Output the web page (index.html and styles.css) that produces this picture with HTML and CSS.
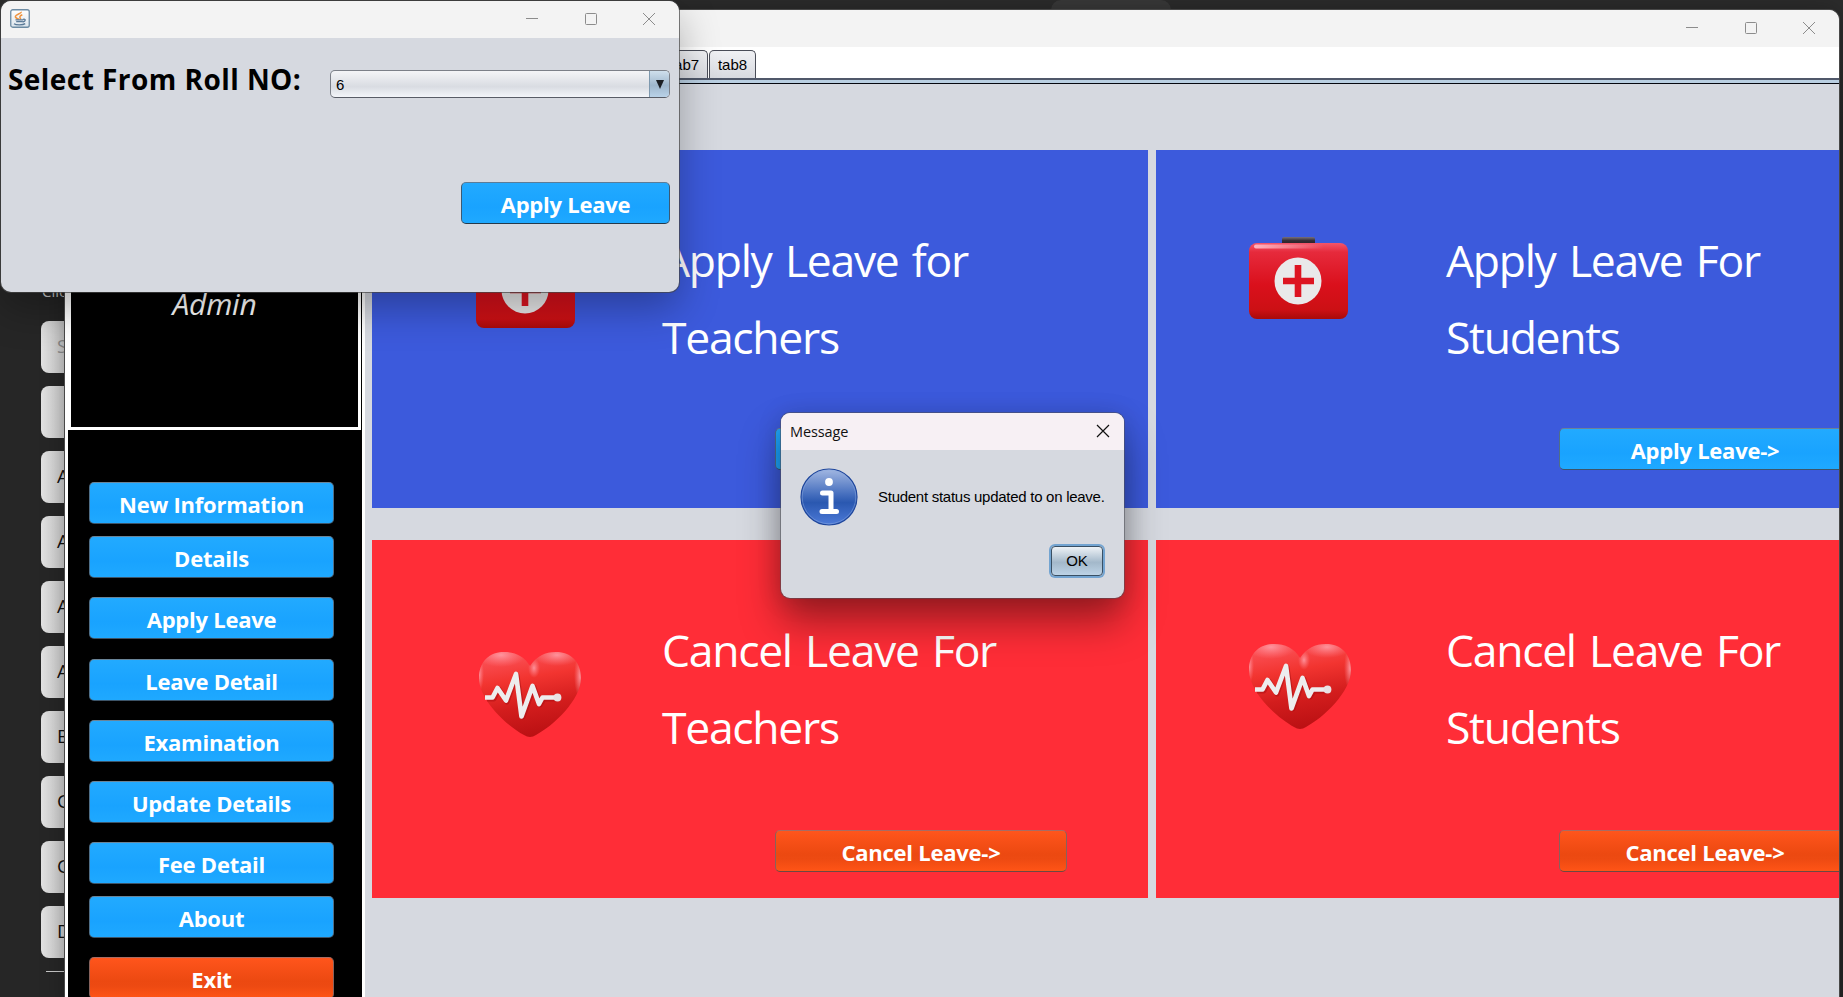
FILE: index.html
```html
<!DOCTYPE html>
<html lang="en">
<head>
<meta charset="utf-8">
<title>Leave Management</title>
<link rel="stylesheet" href="styles.css">
</head>
<body>
<svg class="defs" width="0" height="0" aria-hidden="true">
  <defs>
    <linearGradient id="kitBody" x1="0" y1="0" x2="0" y2="1">
      <stop offset="0" stop-color="#f4566a"/><stop offset=".12" stop-color="#e62a3c"/>
      <stop offset=".55" stop-color="#da101c"/><stop offset=".88" stop-color="#cc1014"/><stop offset="1" stop-color="#a80a0a"/>
    </linearGradient>
    <linearGradient id="kitShine" x1="0" y1="0" x2="1" y2="0">
      <stop offset="0" stop-color="#ffb4c0"/><stop offset="1" stop-color="#ffb4c0" stop-opacity="0"/>
    </linearGradient>
    <linearGradient id="handle" x1="0" y1="0" x2="0" y2="1">
      <stop offset="0" stop-color="#77707c"/><stop offset=".4" stop-color="#352d35"/><stop offset="1" stop-color="#2a1a1f"/>
    </linearGradient>
    <linearGradient id="heartBody" x1=".4" y1="0" x2=".6" y2="1">
      <stop offset="0" stop-color="#fb5258"/><stop offset=".3" stop-color="#f23430"/>
      <stop offset=".62" stop-color="#d31d1d"/><stop offset="1" stop-color="#b80f12"/>
    </linearGradient>
    <radialGradient id="glow">
      <stop offset="0" stop-color="#ffa0aa" stop-opacity=".85"/><stop offset="1" stop-color="#ff8088" stop-opacity="0"/>
    </radialGradient>
    <linearGradient id="info" x1="0" y1="0" x2="0" y2="1">
      <stop offset="0" stop-color="#a3b8e2"/><stop offset=".45" stop-color="#466fbe"/>
      <stop offset=".6" stop-color="#2a58b0"/><stop offset="1" stop-color="#4d7ad8"/>
    </linearGradient>
    <linearGradient id="javaBg" x1="0" y1="0" x2="0" y2="1">
      <stop offset="0" stop-color="#fff"/><stop offset="1" stop-color="#dce5ec"/>
    </linearGradient>
    <clipPath id="heartClip"><path d="M51 14C58 4 66 0 77 0C92 0 102 10 102 26C102 48 74 74 57 83Q51 87 45 83C28 74 0 48 0 26C0 10 10 0 25 0C36 0 45 4 51 14Z"/></clipPath>
    <symbol id="kit" viewBox="0 0 99 82">
      <rect x="33" y="0" width="33" height="9" rx="2" fill="url(#handle)"/>
      <rect x="0" y="6" width="99" height="76" rx="8" fill="url(#kitBody)"/>
      <rect x="5" y="7.5" width="70" height="4" rx="2" fill="url(#kitShine)"/>
      <circle cx="49" cy="44" r="23.5" fill="#e9e9ea"/>
      <path d="M34 44h31M49 28v32" stroke="#dd1421" stroke-width="6.6"/>
    </symbol>
    <symbol id="heart" viewBox="0 0 102 86">
      <g clip-path="url(#heartClip)">
        <rect width="102" height="86" fill="url(#heartBody)"/>
        <ellipse cx="22" cy="3" rx="25" ry="12" fill="url(#glow)"/>
        <ellipse cx="78" cy="3" rx="24" ry="11" fill="url(#glow)"/>
        <ellipse cx="101" cy="24" rx="6" ry="22" fill="url(#glow)"/>
        <ellipse cx="0" cy="22" rx="5" ry="18" fill="url(#glow)"/>
        <ellipse cx="55" cy="16" rx="6" ry="10" fill="url(#glow)"/>
      </g>
      <path d="M8 47H15L20 37L28 50L38 23L44 65L55 35L61 53L65 47H79" fill="none" stroke="#a80d12" stroke-width="5" stroke-linejoin="round" opacity=".5"/>
      <path d="M6 45.5H13.5L18.5 36L27 48.500L37 22L42.500 64.500L53.500 34L60 52L63.500 45.500H78" fill="none" stroke="#ededee" stroke-width="4.700" stroke-linejoin="round"/>
      <circle cx="78.500" cy="45.500" r="3.900" fill="#e9e2e4"/>
    </symbol>
  </defs>
</svg>

<main class="desktop">
  <div class="back-tab"></div>

  <aside class="back-list">
    <p class="back-hint">Click</p>
    <div class="back-item muted">S</div>
    <div class="back-item"></div>
    <div class="back-item">A</div>
    <div class="back-item">A</div>
    <div class="back-item">A</div>
    <div class="back-item">A</div>
    <div class="back-item">B</div>
    <div class="back-item">C</div>
    <div class="back-item">C</div>
    <div class="back-item">D</div>
    <div class="back-edge"></div>
  </aside>

  <section class="window main-window">
    <header class="titlebar main-title">
      <svg class="ctl" viewBox="0 0 12 12"><path d="M0 5.500H12"/></svg>
      <svg class="ctl" viewBox="0 0 12 12"><rect x=".5" y=".5" width="11" height="11" rx="1"/></svg>
      <svg class="ctl" viewBox="0 0 12 12"><path d="M0 0L12 12M12 0L0 12"/></svg>
    </header>
    <div class="main-body">
      <nav class="sidebar">
        <div class="profile"><span class="role">Admin</span></div>
        <div class="menu">
          <button class="btn">New Information</button>
          <button class="btn near">Details</button>
          <button class="btn">Apply Leave</button>
          <button class="btn far">Leave Detail</button>
          <button class="btn">Examination</button>
          <button class="btn">Update Details</button>
          <button class="btn">Fee Detail</button>
          <button class="btn near">About</button>
          <button class="btn danger">Exit</button>
        </div>
      </nav>
      <div class="content">
        <div class="tabs"><span class="tab">tab7</span><span class="tab">tab8</span></div>
        <div class="tab-rule"></div>
        <div class="cards">
          <article class="card apply">
            <svg class="kit low" viewBox="0 0 99 82"><use href="#kit"/></svg>
            <div class="card-body"><h2>Apply Leave for<br>Teachers</h2><button class="btn wide">Apply Leave-&gt;</button></div>
          </article>
          <article class="card apply">
            <svg class="kit" viewBox="0 0 99 82"><use href="#kit"/></svg>
            <div class="card-body"><h2>Apply Leave For<br>Students</h2><button class="btn wide">Apply Leave-&gt;</button></div>
          </article>
          <article class="card cancel">
            <svg class="heart low" viewBox="0 0 102 86"><use href="#heart"/></svg>
            <div class="card-body"><h2>Cancel Leave For<br>Teachers</h2><button class="btn wide danger">Cancel Leave-&gt;</button></div>
          </article>
          <article class="card cancel">
            <svg class="heart" viewBox="0 0 102 86"><use href="#heart"/></svg>
            <div class="card-body"><h2>Cancel Leave For<br>Students</h2><button class="btn wide danger">Cancel Leave-&gt;</button></div>
          </article>
        </div>
      </div>
    </div>
  </section>

  <section class="window roll-window">
    <header class="titlebar roll-title">
      <svg class="java" viewBox="0 0 20 20">
        <rect x=".75" y=".75" width="18.500" height="17.500" rx="2" fill="url(#javaBg)" stroke="#6d8ba3" stroke-width="1.300"/>
        <path d="M11.200 2.800C12 5-.5 6.500 8.800 10.300M12.300 5.800C9.500 7 9.200 8 10.800 10.300" fill="none" stroke="#ef9440" stroke-width="1.500"/>
        <path d="M5.500 10.800H13.200M6.200 12.700H12.600M13 10.400C16 9.500 16 12.400 12.700 13" fill="none" stroke="#5b7a97" stroke-width="1.300"/>
        <path d="M4 14.700C6 16.200 13 16.200 15.200 14.600" fill="none" stroke="#5b7a97" stroke-width="1.300"/>
      </svg>
      <svg class="ctl" viewBox="0 0 12 12"><path d="M0 5.500H12"/></svg>
      <svg class="ctl" viewBox="0 0 12 12"><rect x=".5" y=".5" width="11" height="11" rx="1"/></svg>
      <svg class="ctl" viewBox="0 0 12 12"><path d="M0 0L12 12M12 0L0 12"/></svg>
    </header>
    <div class="roll-row">
      <label class="roll-label">Select From Roll NO:</label>
      <div class="combo"><span class="combo-value">6</span><span class="combo-arrow"><svg viewBox="0 0 8 9" width="8" height="9"><path d="M0 0H8L4 9Z" fill="#1c1f24"/></svg></span></div>
    </div>
    <div class="roll-actions"><button class="btn">Apply Leave</button></div>
  </section>

  <section class="window dialog">
    <header class="dialog-title"><span>Message</span>
      <svg class="ctl dark" viewBox="0 0 12 12"><path d="M0 0L12 12M12 0L0 12"/></svg>
    </header>
    <div class="dialog-row">
      <svg class="info" viewBox="0 0 58 58">
        <circle cx="29" cy="29" r="28" fill="url(#info)" stroke="#1e469c" stroke-width="1.200"/>
        <circle cx="29" cy="29" r="26.800" fill="none" stroke="#8eaae0" stroke-width=".8" opacity=".6"/>
        <circle cx="29" cy="14" r="3.900" fill="#fff"/>
        <path d="M22.500 25H31V43.500M22 43.500H36.500" fill="none" stroke="#fff" stroke-width="5" stroke-linecap="round" stroke-linejoin="round"/>
      </svg>
      <p class="dialog-text">Student status updated to on leave.</p>
    </div>
    <div class="dialog-actions"><button class="ok">OK</button></div>
  </section>
</main>
</body>
</html>
```
FILE: styles.css
```css
* { box-sizing: border-box; }
body { margin: 0; background: #262626; font-family: "Open Sans", "Noto Sans", sans-serif; overflow: hidden; }
button { font: inherit; margin: 0; }
h2, p { margin: 0; }
.defs { position: absolute; }

.desktop {
  position: relative;
  width: 1843px;
  height: 997px;
  overflow: hidden;
  background: linear-gradient(#2c2c2c 0 60px, #262626 120px);
}
.back-tab {
  position: absolute;
  left: 1051px; top: 0;
  width: 120px; height: 10px;
  background: #393939;
  border-radius: 10px 10px 0 0;
}

/* form behind the main window */
.back-list {
  position: absolute;
  left: 41px; top: 278px;
  width: 60px;
  display: flex;
  flex-direction: column;
  gap: 13px;
}
.back-hint { height: 30px; font-size: 15px; line-height: 26px; color: #cfcfcf; padding-left: 1px; }
.back-item {
  height: 52px;
  border-radius: 8px;
  background: linear-gradient(90deg, #e2e2e2, #c8c8c8 24px);
  padding-left: 16px;
  font-size: 19px;
  line-height: 51px;
  color: #111;
  flex: none;
}
.muted { color: #8d8d8d; }
.back-edge { height: 1px; margin-left: 5px; background: #c8c8c8; }

.window { position: absolute; overflow: hidden; background: #d6d9e0; }
.titlebar { display: flex; align-items: center; background: #f3f3f3; }
.ctl { width: 12px; height: 12px; flex: none; fill: none; stroke: #8c8c8c; stroke-width: 1; overflow: visible; }
.ctl.dark { stroke: #111; stroke-width: 1.2; }

/* main window */
.main-window {
  left: 65px; top: 10px;
  width: 1774px; height: 1000px;
  border-radius: 10px 10px 0 0;
  background: #fff;
  box-shadow: 0 0 0 1px #484848, 0 0 24px rgba(0, 0, 0, .3);
}
.main-title { height: 37px; justify-content: flex-end; gap: 46.5px; padding: 0 24px 2px 0; }
.main-body { display: flex; height: 963px; }
.sidebar { width: 300px; flex: none; background: #000; border: 3px solid #fff; border-top: 0; }
.profile {
  width: 293px; height: 383px;
  border: 3px solid #fff;
  display: flex;
  justify-content: center;
  align-items: flex-end;
  padding-bottom: 98px;
}
.role { color: #fff; font-size: 30px; line-height: 50px; font-style: italic; font-weight: 400; letter-spacing: -.2px; }
.menu { display: flex; flex-direction: column; padding: 52px 28px 0 21px; gap: 19px; }
.menu .near { margin-top: -7px; }
.menu .far { margin-top: 1px; }

.btn {
  height: 42px;
  flex: none;
  border: 1px solid;
  border-color: #6a8498 #4f6f88 #3d5468;
  border-radius: 5px;
  background: linear-gradient(#22aaff, #19a3ff 60%, #1fa9ff);
  color: #fff;
  font-size: 22px;
  font-weight: 700;
  line-height: 36px;
  padding: 1px 0 0;
  letter-spacing: -.24px;
  white-space: nowrap;
}
.danger {
  border-color: #a86c64 #87625c #6d4842;
  background: linear-gradient(#ff551c, #ec4911 58%, #ed4a12 70%, #ff5416);
}

.content { flex: 1; min-width: 0; background: #d6d9e0; display: flex; flex-direction: column; }
.tabs {
  height: 31px;
  flex: none;
  background: #fff;
  display: flex;
  align-items: flex-end;
  gap: 1px;
  padding-left: 296px;
}
.tab {
  width: 47px; height: 28px;
  border: 1px solid #4a4d58;
  border-bottom: 0;
  border-radius: 5px 5px 0 0;
  background: linear-gradient(#f0f1f4, #d8dae0);
  text-align: center;
  font: 15px/27px "Liberation Sans", Arial, sans-serif;
}
.tab-rule { height: 6px; flex: none; background: #b9cfe2; border-top: 2px solid #50586a; border-bottom: 1px solid #05070f; }
.cards {
  display: grid;
  grid-template-columns: 776px 776px;
  grid-template-rows: 358px 358px;
  gap: 32px 8px;
  padding: 66px 0 0 7px;
}
.card { display: flex; }
.apply { background: #3c5adc; }
.cancel { background: #ff2d37; }
.card-body { padding: 71px 0 0; display: flex; flex-direction: column; align-items: flex-start; }
.card h2 {
  color: #fff;
  font-size: 44.5px;
  line-height: 77px;
  font-weight: 400;
  letter-spacing: -1.3px;
  word-spacing: 3px;
  white-space: nowrap;
}
.card .wide { width: 292px; margin-left: 113px; }
.apply .wide { margin-top: 53px; }
.cancel .wide { margin-top: 65px; }
.kit { width: 99px; height: 82px; margin: 87px 98px 0 93px; flex: none; }
.kit.low { margin: 96px 87px 0 104px; }
.heart { width: 102px; height: 86px; margin: 104px 95px 0 93px; flex: none; }
.heart.low { margin: 112px 81px 0 107px; }

/* roll number window */
.roll-window {
  left: 1px; top: 1px;
  width: 678px; height: 291px;
  border-radius: 10px;
  box-shadow: 0 0 0 1px rgba(70, 70, 70, .7), 0 16px 40px rgba(0, 0, 0, .3);
}
.roll-title { height: 37px; gap: 46.5px; padding: 0 24px 1px 9px; }
.java { width: 20px; height: 20px; margin-right: auto; }
.roll-row { display: flex; align-items: flex-start; justify-content: space-between; padding: 22px 9px 0 7px; height: 145px; }
.roll-label { font-size: 28px; line-height: 38px; font-weight: 700; color: #000; white-space: nowrap; letter-spacing: .45px; }
.combo {
  display: flex;
  width: 340px; height: 28px;
  margin-top: 10px;
  border: 1px solid #7c8088;
  border-bottom-color: #585c66;
  border-radius: 5px;
  overflow: hidden;
  background: linear-gradient(#f4f5f7, #d9dce2 60%, #f3f5f9);
}
.combo-value { flex: 1; padding-left: 5px; font: 15px/27px "Liberation Sans", Arial, sans-serif; }
.combo-arrow {
  width: 20px;
  display: flex;
  align-items: center;
  justify-content: center;
  background: linear-gradient(#cfdfec, #9fb7cd 55%, #b9d2e8);
  border-left: 1px solid #7d98ae;
}
.roll-actions { display: flex; justify-content: flex-end; padding-right: 9px; }
.roll-actions .btn { width: 209px; margin-top: -1px; border-color: #5b7c98 #3b5a74 #243a4c; }

/* message dialog */
.dialog {
  left: 781px; top: 413px;
  width: 343px; height: 185px;
  border-radius: 9px;
  box-shadow: 0 0 0 1px rgba(80, 80, 90, .55), 0 24px 40px rgba(0, 0, 0, .38), 0 2px 24px rgba(0, 0, 0, .15);
}
.dialog-title {
  height: 37px;
  display: flex;
  align-items: center;
  justify-content: space-between;
  background: #f7f0f4;
  padding: 0 15px 1px 9px;
  font-size: 14.5px;
  letter-spacing: -.1px;
  color: #111;
}
.dialog-row { display: flex; align-items: center; gap: 20px; padding: 18px 0 0 19px; }
.info { width: 58px; height: 58px; flex: none; }
.dialog-text { font: 15px/20px "Liberation Sans", Arial, sans-serif; color: #000; white-space: nowrap; letter-spacing: -.27px; }
.dialog-actions { display: flex; justify-content: flex-end; padding: 20px 21px 0 0; }
.ok {
  width: 52px; height: 30px;
  border: 1px solid #3a5064;
  border-radius: 4px;
  background: linear-gradient(#eef2f6, #a3b8ca 55%, #bdd3e6);
  box-shadow: 0 0 0 2px #73a4d1;
  font: 15px/28px "Liberation Sans", Arial, sans-serif;
  padding: 0;
}
```
